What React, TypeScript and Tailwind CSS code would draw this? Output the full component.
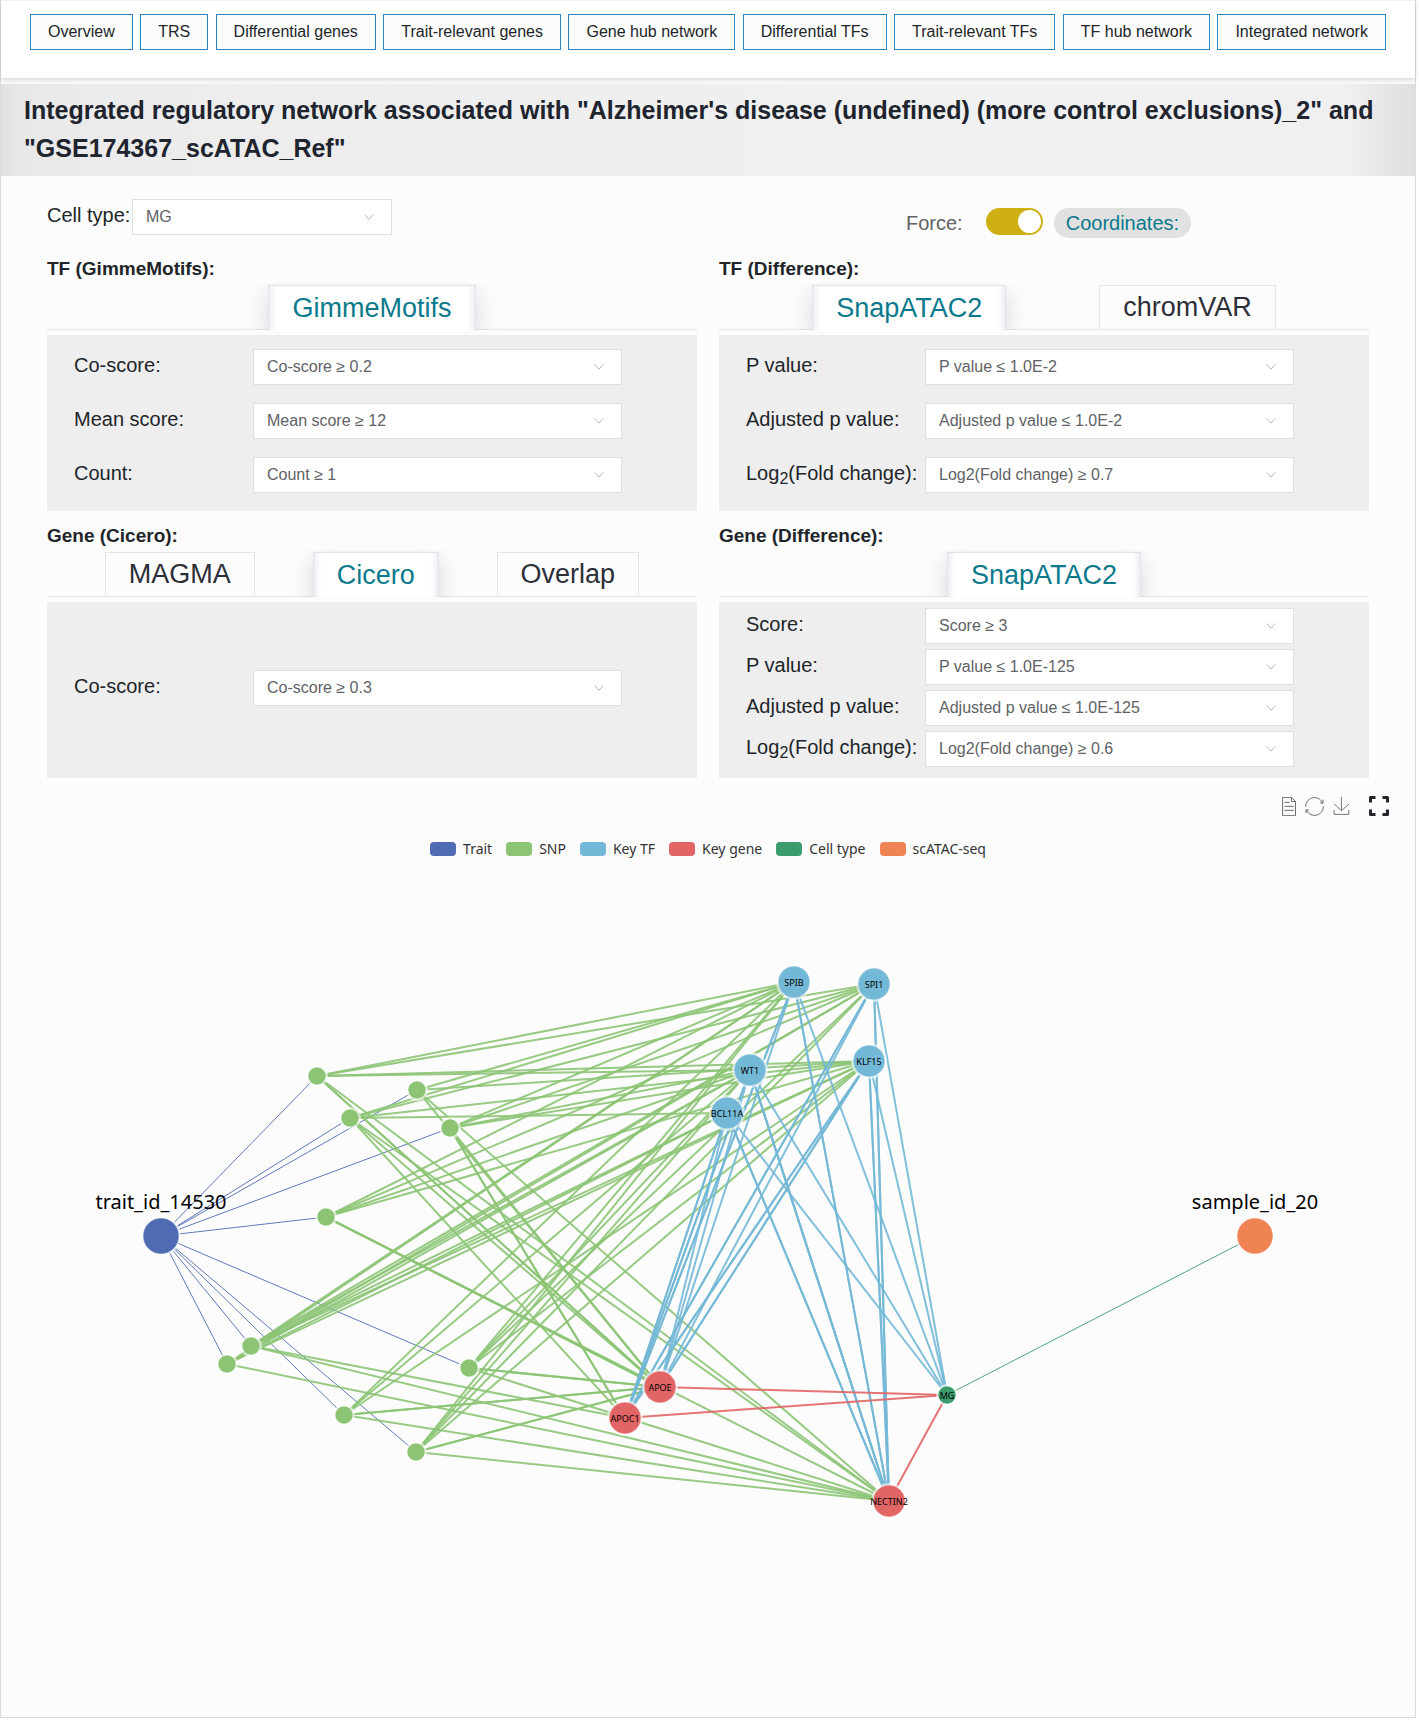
import React, { useId } from "react";

const NAV = [
  "Overview",
  "TRS",
  "Differential genes",
  "Trait-relevant genes",
  "Gene hub network",
  "Differential TFs",
  "Trait-relevant TFs",
  "TF hub network",
  "Integrated network",
];

function Select({ id, value }: { id: string; value: string }) {
  return (
    <div className="relative w-full">
      <select
        id={id}
        className="block h-9 w-full appearance-none border border-[#dcdfe6] bg-white pr-9 pl-[13px] text-[16px] text-[#606266] outline-none"
      >
        <option>{value}</option>
      </select>
      <svg
        viewBox="0 0 10 8"
        className="pointer-events-none absolute top-[14px] right-[18px] h-2 w-2.5"
        fill="none"
        stroke="#b4b8c0"
        strokeWidth="1"
      >
        <path d="M0.8 1.5 L5 6.2 L9.2 1.5" />
      </svg>
    </div>
  );
}

function Field({ label, value }: { label: React.ReactNode; value: string }) {
  const id = useId();
  return (
    <div className="flex items-center">
      <label
        htmlFor={id}
        className="w-[179px] shrink-0 pb-[5px] text-[20px] leading-6 whitespace-nowrap text-[#212529]"
      >
        {label}
      </label>
      <Select id={id} value={value} />
    </div>
  );
}

type SectionProps = {
  title: string;
  tabs: string[];
  active: string;
  dense?: boolean;
  children: React.ReactNode;
};

function Section({ title, tabs, active, dense, children }: SectionProps) {
  return (
    <section>
      <h2 className="h-7 text-[19px] leading-7 font-bold text-[#212529]">{title}</h2>
      <div
        role="tablist"
        className="flex h-[47px] items-end justify-evenly overflow-hidden shadow-[inset_0_-1px_0_#e4e5ee]"
      >
        {tabs.map((t) => (
          <button
            key={t}
            role="tab"
            aria-selected={t === active}
            className={
              t === active
                ? "h-[45px] border border-b-0 border-[#e2e3ec] bg-white px-[23px] pb-px text-[27px] leading-10 text-[#0b7a8c] shadow-[0_8px_22px_rgba(70,70,100,0.2),inset_7px_0_6px_-5px_rgba(70,70,100,0.13),inset_-7px_0_6px_-5px_rgba(70,70,100,0.13)]"
                : "h-[45px] border border-[#e4e5ee] bg-[#fcfcfc] px-[23px] pb-px text-[27px] leading-10 text-[#2c2f38]"
            }
          >
            {t}
          </button>
        ))}
      </div>
      <div
        className={
          dense
            ? "mt-[5px] flex min-h-[176px] flex-col gap-[5px] bg-[#eeeeee] pt-[6px] pr-[75px] pb-[10px] pl-[27px]"
            : "mt-[5px] flex min-h-[176px] flex-col justify-center gap-[18px] bg-[#eeeeee] pt-[14px] pr-[75px] pb-[18px] pl-[27px]"
        }
      >
        {children}
      </div>
    </section>
  );
}

const C = {
  trait: "#4f6bb3",
  snp: "#8cc474",
  tf: "#73b8d6",
  gene: "#e26565",
  cell: "#3b9c6e",
  seq: "#f08354",
};

const LEGEND: [string, string][] = [
  ["Trait", C.trait],
  ["SNP", C.snp],
  ["Key TF", C.tf],
  ["Key gene", C.gene],
  ["Cell type", C.cell],
  ["scATAC-seq", C.seq],
];

type Node = { x: number; y: number; r: number; c: string; label?: string };

const N: Record<string, Node> = {
  trait: { x: 161, y: 1236, r: 18, c: C.trait },
  s1: { x: 317, y: 1076, r: 9, c: C.snp },
  s2: { x: 417, y: 1090, r: 9, c: C.snp },
  s3: { x: 350, y: 1118, r: 9, c: C.snp },
  s4: { x: 450, y: 1128, r: 9, c: C.snp },
  s5: { x: 326, y: 1217, r: 9, c: C.snp },
  s6: { x: 251, y: 1346, r: 9, c: C.snp },
  s7: { x: 227, y: 1364, r: 9, c: C.snp },
  s8: { x: 469, y: 1368, r: 9, c: C.snp },
  s9: { x: 344, y: 1415, r: 9, c: C.snp },
  s10: { x: 416, y: 1452, r: 9, c: C.snp },
  SPIB: { x: 794, y: 982, r: 16, c: C.tf, label: "SPIB" },
  SPI1: { x: 874, y: 984, r: 16, c: C.tf, label: "SPI1" },
  KLF15: { x: 869, y: 1061, r: 16, c: C.tf, label: "KLF15" },
  WT1: { x: 750, y: 1070, r: 16, c: C.tf, label: "WT1" },
  BCL11A: { x: 727, y: 1113, r: 16, c: C.tf, label: "BCL11A" },
  APOE: { x: 660, y: 1387, r: 16, c: C.gene, label: "APOE" },
  APOC1: { x: 625, y: 1418, r: 16, c: C.gene, label: "APOC1" },
  NECTIN2: { x: 889, y: 1501, r: 16, c: C.gene, label: "NECTIN2" },
  MG: { x: 947, y: 1395, r: 9, c: C.cell, label: "MG" },
  sample: { x: 1255, y: 1236, r: 18, c: C.seq },
};

// source: targets; a target listed twice is linked by two overlapping edges
const LINKS: Record<string, string> = {
  trait: "s1 s2 s3 s4 s5 s6 s7 s8 s9 s10",
  s1: "SPIB SPI1 KLF15 WT1 APOE APOE NECTIN2",
  s2: "SPIB KLF15 APOE NECTIN2",
  s3: "SPIB SPI1 KLF15 BCL11A APOE APOC1 NECTIN2",
  s4: "SPIB SPI1 KLF15 WT1 APOE APOC1 APOC1",
  s5: "SPIB SPI1 KLF15 WT1 APOE APOE NECTIN2",
  s6: "SPIB SPI1 KLF15 WT1 BCL11A APOC1 NECTIN2",
  s7: "SPIB SPI1 KLF15 WT1 BCL11A NECTIN2",
  s8: "SPIB SPI1 KLF15 WT1 APOE APOE NECTIN2",
  s9: "SPIB KLF15 WT1 APOE APOE NECTIN2",
  s10: "SPIB SPI1 KLF15 WT1 APOE APOE NECTIN2",
  SPIB: "APOE APOC1 APOC1 NECTIN2 NECTIN2 MG",
  SPI1: "APOE APOC1 APOC1 NECTIN2 NECTIN2 MG",
  KLF15: "APOE APOE APOC1 APOC1 NECTIN2 NECTIN2 MG",
  WT1: "APOE APOC1 APOC1 NECTIN2 NECTIN2 NECTIN2 MG",
  BCL11A: "APOE APOC1 APOC1 NECTIN2 NECTIN2 MG",
  APOE: "MG",
  APOC1: "MG",
  NECTIN2: "MG",
  MG: "sample",
};

function Network() {
  return (
    <svg viewBox="1 870 1414 847" className="mt-3 block h-auto w-full" role="img" aria-label="Integrated regulatory network">
      {Object.entries(LINKS).map(([from, list]) =>
        list.split(" ").map((to, i) => {
          const a = N[from];
          const b = N[to];
          const thin = from === "trait" || to === "sample";
          return (
            <line
              key={from + to + i}
              x1={a.x}
              y1={a.y}
              x2={b.x}
              y2={b.y}
              stroke={a.c}
              strokeWidth={thin ? 1 : 2}
              strokeOpacity={0.9}
            />
          );
        }),
      )}
      {Object.entries(N).map(([k, n]) => (
        <g key={k}>
          <circle cx={n.x} cy={n.y} r={n.r + 2} fill="#ffffff" fillOpacity={0.55} />
          <circle cx={n.x} cy={n.y} r={n.r} fill={n.c} stroke="#ffffff" strokeOpacity={0.5} strokeWidth="1" />
        </g>
      ))}
      <g fontFamily="'Noto Sans', 'Open Sans', sans-serif" textAnchor="middle" fill="#000000">
        {Object.values(N).map((n) =>
          n.label ? (
            <text key={n.label} x={n.x} y={n.y + 4} fontSize="9">
              {n.label}
            </text>
          ) : null,
        )}
        <text x="161" y="1209" fontSize="20">
          trait_id_14530
        </text>
        <text x="1255" y="1209" fontSize="20">
          sample_id_20
        </text>
      </g>
    </svg>
  );
}

function Toolbar() {
  return (
    <div className="mt-4 flex h-6 items-center justify-end pr-[26px] text-[#666666]">
      <button aria-label="Data view" className="mr-[9px]">
        <svg viewBox="10 1 42 58" className="h-[19px] w-[14px]" fill="none" stroke="currentColor" strokeWidth="3">
          <path d="M17.5,17.3H33 M45.4,29.5h-28 M11.5,2v56H51V14.8L38.4,2H11.5z M38.4,2.2v12.7H51 M45.4,41.7h-28" />
        </svg>
      </button>
      <button aria-label="Restore" className="mr-[9px]">
        <svg viewBox="0 0 60 60" className="h-[19px] w-[19px]" fill="none" stroke="currentColor" strokeWidth="3">
          <path d="M47,18.9h9.8V8.7 M56.3,20.1C52.1,9,40.5,0.6,26.8,2.1C12.6,3.7,1.6,16.2,2.1,30.6 M13,41.1H3.1v10.2 M3.7,39.9c4.2,11.1,15.8,19.5,29.5,18c14.2-1.6,25.2-14.1,24.7-28.5" />
        </svg>
      </button>
      <button aria-label="Save as image" className="mr-[19px]">
        <svg viewBox="2 0 55 60" className="h-[18px] w-[17px]" fill="none" stroke="currentColor" strokeWidth="3">
          <path d="M4.7,22.9L29.3,45.5L54.7,23.4M4.6,43.6L4.6,58L53.8,58L53.8,43.6M29.2,45.1L29.2,0" />
        </svg>
      </button>
      <button aria-label="Full screen" className="text-[#212529]">
        <svg
          viewBox="0 0 20 20"
          className="h-5 w-5"
          fill="none"
          stroke="currentColor"
          strokeWidth="3"
          strokeLinejoin="round"
        >
          <path d="M1.5 6.5V1.5H6.5 M13.5 1.5H18.5V6.5 M18.5 13.5V18.5H13.5 M6.5 18.5H1.5V13.5" />
        </svg>
      </button>
    </div>
  );
}

export default function App() {
  const log2 = (
    <>
      Log<sub className="text-[16px]">2</sub>(Fold change):
    </>
  );
  return (
    <div className="bg-white pr-[3px] pb-[9px] font-['Liberation_Sans',Arial,sans-serif]">
      <div className="border border-t-0 border-[#dcdcdc] bg-[#fcfcfc]">
        <header className="mb-[6px] flex h-[78px] items-start justify-between border-t border-[#f3f3f3] bg-white px-[29px] pt-[13px] shadow-[0_2px_5px_rgba(0,0,0,0.14)]">
          {NAV.map((n) => (
            <button
              key={n}
              className="h-9 border border-[#2a85c4] bg-[#fcfcfc] px-[17px] pb-px text-[16px] whitespace-nowrap text-[#212529]"
            >
              {n}
            </button>
          ))}
        </header>
        <h1 className="relative bg-[linear-gradient(90deg,#e0e0e0_0%,#e8e8e8_1%,#ececec_8%,#f1f1f1_70%,#f0f0f0_95%,#dfdfdf_100%)] pt-[7px] pr-6 pb-[9px] pl-[23px] text-[25px] leading-[38px] font-bold text-[#20242e]">
          Integrated regulatory network associated with "Alzheimer's disease (undefined) (more control exclusions)_2" and
          "GSE174367_scATAC_Ref"
        </h1>
        <main className="px-[46px]">
          <div className="mb-[14px] grid grid-cols-2 gap-x-[22px] pt-[23px]">
            <div className="flex h-9 items-center">
              <label htmlFor="cell-type" className="w-[85px] shrink-0 pb-1 text-[20px] leading-6 whitespace-nowrap text-[#212529]">
                Cell type:
              </label>
              <div className="w-[260px]">
                <Select id="cell-type" value="MG" />
              </div>
            </div>
            <div className="mt-[6px] flex h-9 items-center pl-[187px] text-[20px] text-[#606266]">
              <label htmlFor="force">Force:</label>
              <input id="force" type="checkbox" role="switch" defaultChecked className="peer sr-only" />
              <label
                htmlFor="force"
                aria-label="Force layout"
                className="mr-[11px] mb-1 ml-[23px] flex h-[27px] w-[57px] items-center justify-end rounded-full bg-[#ceb014] p-[2px]"
              >
                <span className="size-[23px] rounded-full bg-white" />
              </label>
              <button className="h-[30px] rounded-full bg-[#e1e1e1] px-3 leading-[30px] text-[#0b7a8c]">Coordinates:</button>
            </div>
          </div>
          <div className="grid grid-cols-2 gap-x-[22px] gap-y-[11px]">
            <Section title="TF (GimmeMotifs):" tabs={["GimmeMotifs"]} active="GimmeMotifs">
              <Field label="Co-score:" value="Co-score ≥ 0.2" />
              <Field label="Mean score:" value="Mean score ≥ 12" />
              <Field label="Count:" value="Count ≥ 1" />
            </Section>
            <Section title="TF (Difference):" tabs={["SnapATAC2", "chromVAR"]} active="SnapATAC2">
              <Field label="P value:" value="P value ≤ 1.0E-2" />
              <Field label="Adjusted p value:" value="Adjusted p value ≤ 1.0E-2" />
              <Field label={log2} value="Log2(Fold change) ≥ 0.7" />
            </Section>
            <Section title="Gene (Cicero):" tabs={["MAGMA", "Cicero", "Overlap"]} active="Cicero">
              <Field label="Co-score:" value="Co-score ≥ 0.3" />
            </Section>
            <Section title="Gene (Difference):" tabs={["SnapATAC2"]} active="SnapATAC2" dense>
              <Field label="Score:" value="Score ≥ 3" />
              <Field label="P value:" value="P value ≤ 1.0E-125" />
              <Field label="Adjusted p value:" value="Adjusted p value ≤ 1.0E-125" />
              <Field label={log2} value="Log2(Fold change) ≥ 0.6" />
            </Section>
          </div>
        </main>
        <Toolbar />
        <ul className="mt-[22px] flex h-[18px] items-center justify-center gap-[14px] font-['Noto_Sans','Open_Sans',sans-serif] text-[14px] leading-[18px] text-[#333333]">
          {LEGEND.map(([name, color]) => (
            <li key={name} className="flex items-center gap-[7px]">
              <span className="h-[14px] w-[26px] rounded-[4px]" style={{ backgroundColor: color }} />
              {name}
            </li>
          ))}
        </ul>
        <Network />
      </div>
    </div>
  );
}
